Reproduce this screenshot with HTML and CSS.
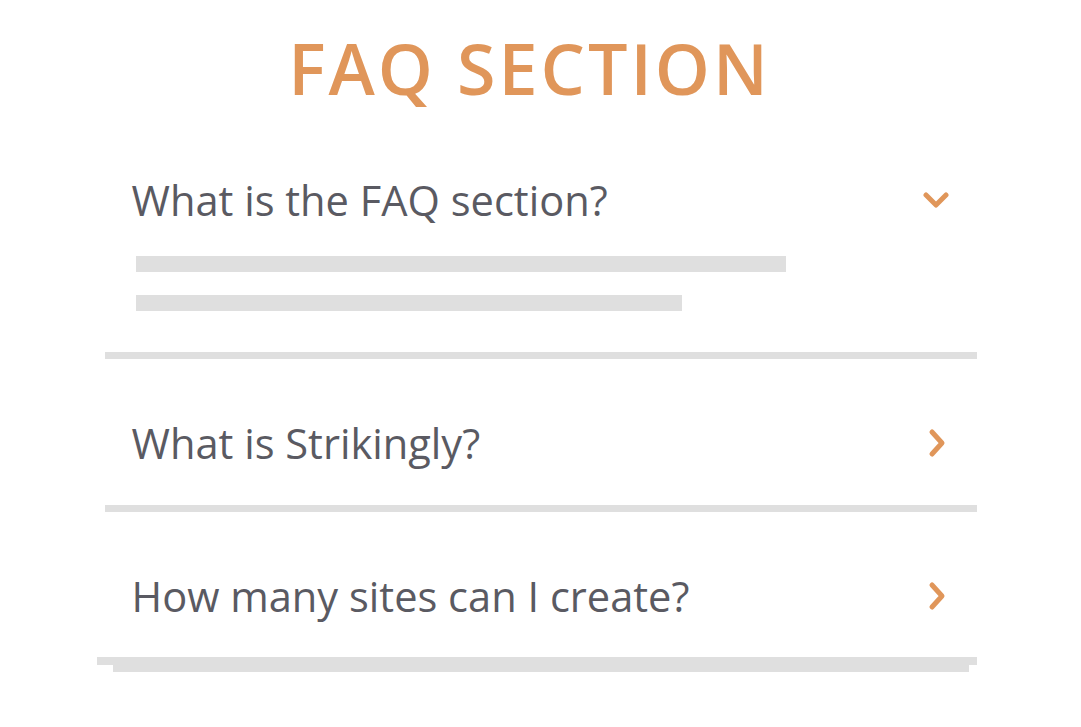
FILE: index.html
```html
<!DOCTYPE html>
<html lang="en">

<head>
    <meta charset="UTF-8">
    <meta name="viewport" content="width=device-width, initial-scale=1.0">
    <title>FAQ Section</title>
    <link rel="stylesheet" href="styles.css">
</head>

<body>
    <div id="faq">
        <h1 class="faq-title">FAQ SECTION</h1>

        <div class="faq-item open">
            <div class="faq-question">
                <span>What is the FAQ section?</span>
                <svg class="chevron down" width="26" height="17" viewBox="0 0 26 17">
                    <polyline points="3,3 13,13 23,3" />
                </svg>
            </div>
            <div class="faq-answer">
                <div class="line long"></div>
                <div class="line short"></div>
            </div>
        </div>

        <div class="faq-item">
            <div class="faq-question">
                <span>What is Strikingly?</span>
                <svg class="chevron right" width="26" height="30" viewBox="0 0 26 30">
                    <polyline points="9,4 19,15 9,26" />
                </svg>
            </div>
        </div>

        <div class="faq-item last">
            <div class="faq-question">
                <span>How many sites can I create?</span>
                <svg class="chevron right" width="26" height="30" viewBox="0 0 26 30">
                    <polyline points="9,4 19,15 9,26" />
                </svg>
            </div>
        </div>

        <div class="faq-base">
            <div class="base-top"></div>
            <div class="base-bottom"></div>
        </div>
    </div>
</body>

</html>
```

FILE: styles.css
```css
body {
    font-family: 'Open Sans', 'Liberation Sans', sans-serif;
    background-color: #fff;
    margin: 0;
}

#faq {
    width: 872px;
    margin: 0 auto;
}

.faq-title {
    margin: 0;
    padding: 23px 22px 0 0;
    font-size: 70px;
    line-height: 90px;
    font-weight: 600;
    letter-spacing: 3px;
    text-align: center;
    color: #e0965a;
}

.faq-item {
    padding: 60px 28px 38px 27px;
    border-bottom: 7px solid #dfdfdf;
}

.faq-item.open {
    padding-top: 63px;
    padding-bottom: 41px;
}

.faq-item.last {
    border-bottom: none;
    padding-bottom: 37px;
}

.faq-question {
    display: flex;
    align-items: center;
    justify-content: space-between;
    height: 48px;
    font-size: 41.6px;
    color: #5a5a62;
}

.chevron polyline {
    fill: none;
    stroke: #e0965a;
    stroke-width: 5;
    stroke-linecap: round;
    stroke-linejoin: round;
}

.faq-answer {
    padding-top: 32px;
    padding-left: 4px;
}

.line {
    height: 16px;
    background-color: #dfdfdf;
}

.line.long {
    width: 650px;
    margin-bottom: 23px;
}

.line.short {
    width: 546px;
}

.faq-base .base-top {
    height: 8px;
    margin-left: -8px;
    background-color: #dfdfdf;
}

.faq-base .base-bottom {
    height: 7px;
    margin: 0 8px;
    background-color: #dfdfdf;
}
```
